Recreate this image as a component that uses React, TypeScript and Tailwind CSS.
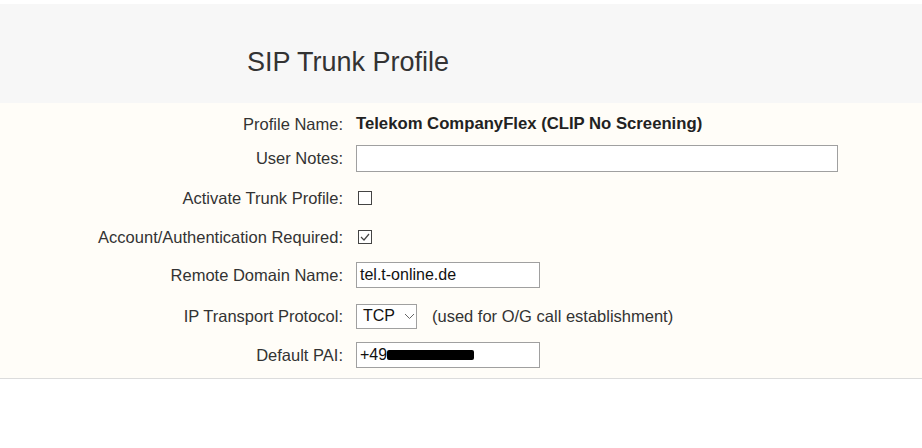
import React from "react";

const font = { fontFamily: '"Liberation Sans", Arial, sans-serif' };

function Row({
  label,
  children,
  className = "",
}: {
  label: string;
  children?: React.ReactNode;
  className?: string;
}) {
  return (
    <div className={`flex h-[28px] items-center ${className}`}>
      <div className="w-[343px] shrink-0 text-right text-[16.5px] text-[#333]">{label}</div>
      <div className="ml-[13px] flex items-center">{children}</div>
    </div>
  );
}

export default function App() {
  return (
    <div className="w-[922px] h-[448px] bg-white" style={font}>
      <div className="h-[4px] bg-white" />
      <div className="h-[99px] bg-[#f7f7f7] flex items-center pl-[247px] pt-[18px]">
        <h1 className="text-[27px] text-[#333] leading-none">SIP Trunk Profile</h1>
      </div>
      <div className="bg-[#fffdf8] border-b border-[#dcdcdc] pt-[7px] pb-[9px] h-[276px]">
        <Row label="Profile Name:">
          <span className="text-[16.7px] font-bold text-[#222]">
            Telekom CompanyFlex (CLIP No Screening)
          </span>
        </Row>
        <Row label="User Notes:" className="mt-[6px]">
          <div className="w-[482px] h-[27px] bg-white border border-[#a0a0a0]" />
        </Row>
        <Row label="Activate Trunk Profile:" className="mt-[12px]">
          <div className="ml-[2px] w-[14px] h-[14px] bg-white border border-[#444]" />
        </Row>
        <Row label="Account/Authentication Required:" className="mt-[11px]">
          <div className="ml-[2px] w-[14px] h-[14px] bg-white border border-[#444] flex items-center justify-center">
            <svg width="10" height="8" viewBox="0 0 10 8">
              <path d="M1 4 L4 7 L9 1" fill="none" stroke="#444" strokeWidth="1.2" />
            </svg>
          </div>
        </Row>
        <Row label="Remote Domain Name:" className="mt-[10px]">
          <div className="w-[184px] h-[26px] bg-white border border-[#a0a0a0] flex items-center pl-[3px] text-[16px] text-[#111]">
            tel.t-online.de
          </div>
        </Row>
        <Row label="IP Transport Protocol:" className="mt-[13px]">
          <div className="w-[61px] h-[25px] bg-white border border-[#a0a0a0] flex items-center pl-[6px] text-[16px] text-[#111]">
            TCP
            <svg className="ml-[9px]" width="11" height="7" viewBox="0 0 11 7">
              <path d="M1 1 L5.5 5.5 L10 1" fill="none" stroke="#666" strokeWidth="1" />
            </svg>
          </div>
          <span className="ml-[15px] text-[16.5px] text-[#333]">(used for O/G call establishment)</span>
        </Row>
        <Row label="Default PAI:" className="mt-[11px]">
          <div className="w-[184px] h-[26px] bg-white border border-[#a0a0a0] flex items-center pl-[3px] text-[16px] text-[#111]">
            +49
            <span className="ml-[0px] inline-block w-[87px] h-[10px] bg-black rounded-[2px]" />
          </div>
        </Row>
      </div>
    </div>
  );
}
